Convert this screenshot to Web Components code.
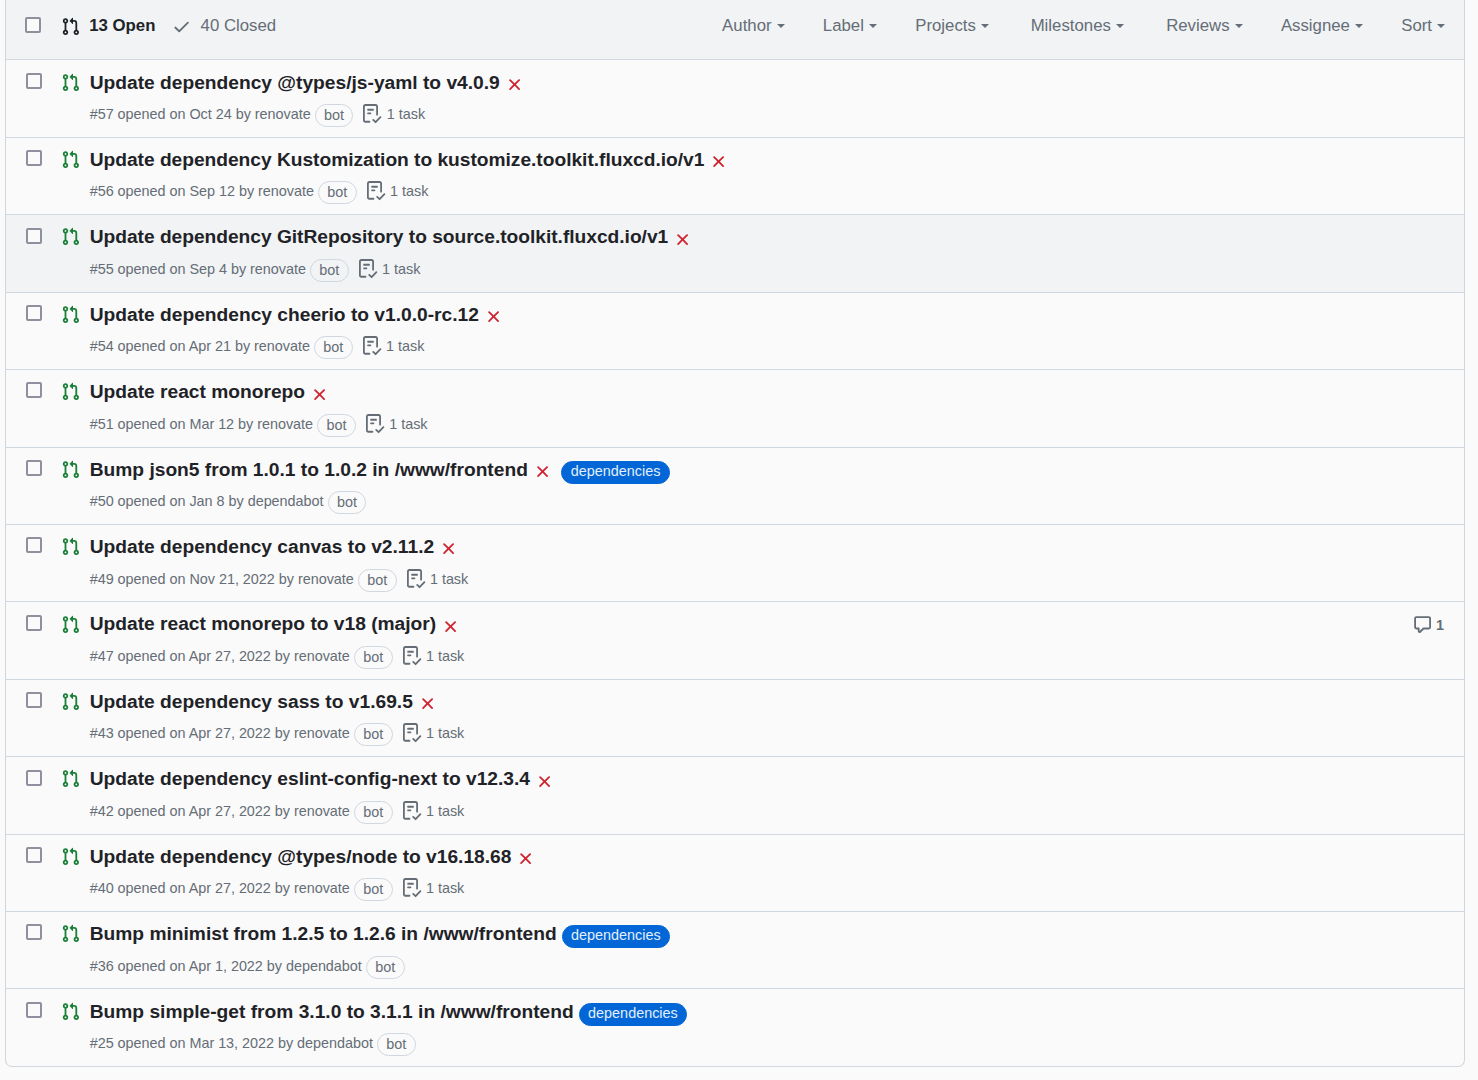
<!DOCTYPE html>
<html lang="en">
<head>
<meta charset="utf-8">
<title>Pull requests</title>
<style>
html,body{margin:0;background:#fafafa}
body{height:1080px;overflow:hidden;font-family:"Liberation Sans",Arial,sans-serif;color:#1f2328}
</style>
</head>
<body>
<pr-list></pr-list>
<script>
const ICONS = {
  pr: 'M1.5 3.25a2.25 2.25 0 1 1 3 2.122v5.256a2.251 2.251 0 1 1-1.5 0V5.372A2.25 2.25 0 0 1 1.5 3.25Zm5.677-.177L9.573.677A.25.25 0 0 1 10 .854V2.5h1A2.5 2.5 0 0 1 13.5 5v5.628a2.251 2.251 0 1 1-1.5 0V5a1 1 0 0 0-1-1h-1v1.646a.25.25 0 0 1-.427.177L7.177 3.427a.25.25 0 0 1 0-.354ZM3.75 2.5a.75.75 0 1 0 0 1.5.75.75 0 0 0 0-1.5Zm0 9.5a.75.75 0 1 0 0 1.5.75.75 0 0 0 0-1.5Zm8.25.75a.75.75 0 1 0 1.5 0 .75.75 0 0 0-1.5 0Z',
  check: 'M13.78 4.22a.75.75 0 0 1 0 1.06l-7.25 7.25a.75.75 0 0 1-1.06 0L2.22 9.28a.751.751 0 0 1 .018-1.042.751.751 0 0 1 1.042-.018L6 10.94l6.72-6.72a.75.75 0 0 1 1.06 0Z',
  x: 'M3.72 3.72a.75.75 0 0 1 1.06 0L8 6.94l3.22-3.22a.749.749 0 0 1 1.275.326.749.749 0 0 1-.215.734L9.06 8l3.22 3.22a.749.749 0 0 1-.326 1.275.749.749 0 0 1-.734-.215L8 9.06l-3.22 3.22a.751.751 0 0 1-1.042-.018.751.751 0 0 1-.018-1.042L6.94 8 3.72 4.78a.75.75 0 0 1 0-1.06Z',
  comment: 'M1 2.75C1 1.784 1.784 1 2.75 1h10.5c.966 0 1.75.784 1.75 1.75v7.5A1.75 1.75 0 0 1 13.25 12H9.06l-2.573 2.573A1.458 1.458 0 0 1 4 13.543V12H2.75A1.75 1.75 0 0 1 1 10.25Zm1.75-.25a.25.25 0 0 0-.25.25v7.5c0 .138.112.25.25.25h2a.75.75 0 0 1 .75.75v2.19l2.72-2.72a.749.749 0 0 1 .53-.22h4.5a.25.25 0 0 0 .25-.25v-7.5a.25.25 0 0 0-.25-.25Z'
};
const TASK = '<g fill="none" stroke="currentColor" stroke-width="1.5" stroke-linecap="round" stroke-linejoin="round"><path d="M5.4 14.8H1.9A1.15 1.15 0 0 1 .75 13.65V2A1.15 1.15 0 0 1 1.9.85h8.7A1.15 1.15 0 0 1 11.75 2v6.9M4.2 4.8h4.2M4.2 7.8h2"/><path d="M8.5 13.2l2 2 4-4.2"/></g>';

class OctIcon extends HTMLElement {
  connectedCallback() {
    const n = this.getAttribute('name');
    this.attachShadow({mode:'open'}).innerHTML = `<style>:host{display:block;flex:none;width:19.2px;height:19.2px}svg{display:block;width:100%;height:100%;overflow:visible}</style>
    <svg viewBox="0 0 16 16" fill="currentColor">${n === 'task' ? TASK : `<path d="${ICONS[n]}"/>`}</svg>`;
  }
}
customElements.define('oct-icon', OctIcon);

class CheckBox extends HTMLElement {
  connectedCallback() {
    this.attachShadow({mode:'open'}).innerHTML = `<style>:host{display:block;flex:none;box-sizing:border-box;width:16px;height:16px;border:2px solid #8f8f9d;border-radius:2px;background:#fafafa}</style>`;
  }
}
customElements.define('check-box', CheckBox);

class FilterMenu extends HTMLElement {
  connectedCallback() {
    this.attachShadow({mode:'open'}).innerHTML = `<style>:host{display:flex;align-items:center;gap:5px;white-space:nowrap}i{width:0;border:4px solid transparent;border-top-color:currentColor;border-bottom:0}</style><span><slot></slot></span><i></i>`;
  }
}
customElements.define('filter-menu', FilterMenu);

class IssueLabel extends HTMLElement {
  connectedCallback() {
    this.attachShadow({mode:'open'}).innerHTML = `<style>
    :host{display:block;flex:none;box-sizing:border-box;height:23px;border:1px solid #d0d7de;border-radius:12px;padding:0 8.4px;font-size:14.4px;line-height:20px;font-weight:400;letter-spacing:0;white-space:nowrap}
    :host([solid]){background:#0366d6;border-color:#0366d6;color:#e4effb;line-height:19px}</style><slot></slot>`;
  }
}
customElements.define('issue-label', IssueLabel);

class ListHeader extends HTMLElement {
  connectedCallback() {
    this.attachShadow({mode:'open'}).innerHTML = `<style>
    :host{display:flex;height:59.43px;box-sizing:border-box;padding:0 19px;align-items:flex-start;background:#f1f3f5;color:#656d76;font-size:16.8px;line-height:20px}
    check-box{margin:17px 20px 0 0}
    .state{display:flex;height:20px;margin-top:16px;white-space:nowrap}
    .state oct-icon{margin:1px 9px 0 0}
    .open{color:#1f2328;font-weight:700;margin-right:17px}
    nav{display:flex;margin:16px 0 0 auto;gap:38.3px}
    filter-menu:nth-child(4){margin-left:3.5px}
    filter-menu:nth-child(5){margin-left:4px}
    </style>
    <check-box></check-box>
    <div class="state open"><oct-icon name="pr"></oct-icon><span>13 Open</span></div>
    <div class="state"><oct-icon name="check"></oct-icon><span>40 Closed</span></div>
    <nav>${['Author','Label','Projects','Milestones','Reviews','Assignee','Sort'].map(t=>`<filter-menu>${t}</filter-menu>`).join('')}</nav>`;
  }
}
customElements.define('list-header', ListHeader);

class PrRow extends HTMLElement {
  connectedCallback() {
    const h = a => this.hasAttribute(a);
    this.attachShadow({mode:'open'}).innerHTML = `<style>
    :host{display:flex;align-items:flex-start;box-sizing:border-box;height:77.421875px;border-top:1px solid #d0d7de;padding:0 20px}
    :host([active]){background:#f1f3f5}
    check-box{margin:12.3px 19px 0 0}
    .pr{color:#1a7f37;margin:12.2px 9px 0 0}
    .main{flex:1;display:flex;flex-direction:column;padding-left:.5px}
    .title{display:flex;height:29px;padding-top:10.1px;font-size:19.2px;line-height:24px;font-weight:700;white-space:nowrap}
    :host([tight]) .title{letter-spacing:-.024px}
    .x{color:#cf222e;margin:4.4px 0 0 4.8px}
    .title issue-label{margin:3.2px 0 0 5px}
    .x + issue-label{margin-left:9.5px}
    .meta{display:flex;height:23px;margin-top:4.5px;font-size:14.4px;line-height:20px;letter-spacing:-.02px;color:#656d76;white-space:nowrap}
    .meta issue-label{margin:0 0 0 4px}
    .meta oct-icon{margin:0 4.2px 0 10px}
    .comments{display:flex;gap:4px;color:#656d76;margin-top:12.2px;font-size:14.4px;line-height:20px;font-weight:700}
    </style>
    <check-box></check-box><oct-icon class="pr" name="pr"></oct-icon>
    <div class="main">
      <div class="title"><span><slot></slot></span>${h('failed')?'<oct-icon class="x" name="x"></oct-icon>':''}${h('dep')?'<issue-label solid>dependencies</issue-label>':''}</div>
      <div class="meta"><span>${this.getAttribute('meta')}</span><issue-label>bot</issue-label>${h('task')?'<oct-icon name="task"></oct-icon><span>1 task</span>':''}</div>
    </div>${h('comments')?`<div class="comments"><oct-icon name="comment"></oct-icon><span>${this.getAttribute('comments')}</span></div>`:''}`;
  }
}
customElements.define('pr-row', PrRow);

class PrList extends HTMLElement {
  connectedCallback() {
    const rows = [
      ['Update dependency @types/js-yaml to v4.0.9','#57 opened on Oct 24 by renovate','failed task'],
      ['Update dependency Kustomization to kustomize.toolkit.fluxcd.io/v1','#56 opened on Sep 12 by renovate','failed task tight'],
      ['Update dependency GitRepository to source.toolkit.fluxcd.io/v1','#55 opened on Sep 4 by renovate','failed task active tight'],
      ['Update dependency cheerio to v1.0.0-rc.12','#54 opened on Apr 21 by renovate','failed task'],
      ['Update react monorepo','#51 opened on Mar 12 by renovate','failed task'],
      ['Bump json5 from 1.0.1 to 1.0.2 in /www/frontend','#50 opened on Jan 8 by dependabot','failed dep'],
      ['Update dependency canvas to v2.11.2','#49 opened on Nov 21, 2022 by renovate','failed task'],
      ['Update react monorepo to v18 (major)','#47 opened on Apr 27, 2022 by renovate','failed task comments="1"'],
      ['Update dependency sass to v1.69.5','#43 opened on Apr 27, 2022 by renovate','failed task'],
      ['Update dependency eslint-config-next to v12.3.4','#42 opened on Apr 27, 2022 by renovate','failed task'],
      ['Update dependency @types/node to v16.18.68','#40 opened on Apr 27, 2022 by renovate','failed task'],
      ['Bump minimist from 1.2.5 to 1.2.6 in /www/frontend','#36 opened on Apr 1, 2022 by dependabot','dep'],
      ['Bump simple-get from 3.1.0 to 3.1.1 in /www/frontend','#25 opened on Mar 13, 2022 by dependabot','dep']
    ];
    this.attachShadow({mode:'open'}).innerHTML = `<style>:host{display:block;box-sizing:border-box;margin:0 13px 0 5px;border:1px solid #d0d7de;border-top:0;border-radius:0 0 7px 7px;overflow:hidden}</style>
    <list-header></list-header>${rows.map(([t,m,a])=>`<pr-row meta="${m}" ${a}>${t}</pr-row>`).join('')}`;
  }
}
customElements.define('pr-list', PrList);
</script>
</body>
</html>
